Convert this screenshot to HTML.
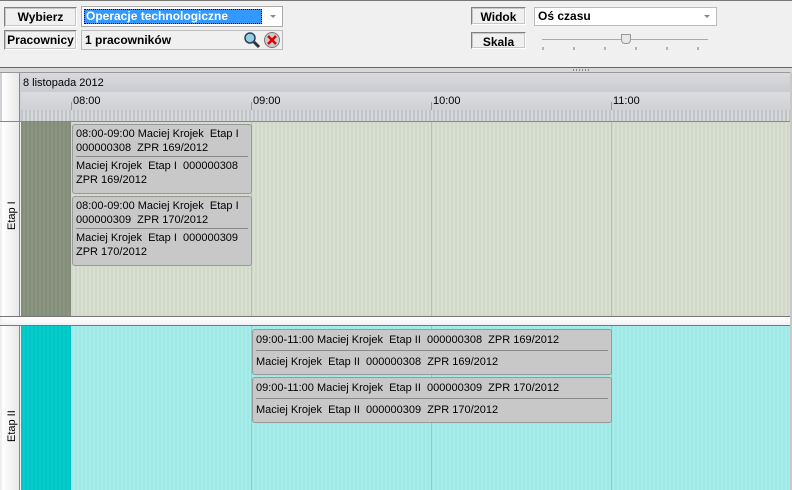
<!DOCTYPE html>
<html><head><meta charset="utf-8"><style>
*{box-sizing:border-box;margin:0;padding:0}
body{width:792px;height:490px;overflow:hidden;background:#f0f0f0;font-family:"Liberation Sans",sans-serif;font-size:11px;color:#000;position:relative}
.a{position:absolute}
.lbl{position:absolute;border:1px solid #fff;border-top-color:#808080;border-left-color:#808080;background:#f0f0f0;font-weight:bold;font-size:12px;text-align:center;line-height:18px}
.lbl::after{content:"";position:absolute;inset:0;border:1px solid #c8c8c8;pointer-events:none}
.card{position:absolute;background:#c8c8c8;border:1px solid #999;border-radius:3px;font-size:11px;line-height:14px;padding:0 3px}
.card hr{border:0;border-top:1px solid #8a8a8a;margin:1px 0 2px}
.vt{position:absolute;transform:rotate(-90deg);transform-origin:left top;white-space:nowrap;font-size:11px}
</style></head><body>
<div class="a" style="left:0;top:0;width:792px;height:1px;background:#777"></div>
<div class="lbl" style="left:4px;top:7px;width:73px;height:20px">Wybierz</div>
<div class="a" style="left:81px;top:6px;width:202px;height:21px;background:#fff;border:1px solid #aaa"></div>
<div class="a" style="left:84px;top:9px;width:178px;height:15px;background:#3399ff;border:1px dotted #000;color:#fff;font-weight:bold;font-size:12px;line-height:13px;padding-left:1px">Operacje technologiczne</div>
<div class="a" style="left:270px;top:15px;width:0;height:0;border:3px solid transparent;border-top:3px solid #888"></div>
<div class="lbl" style="left:4px;top:30px;width:73px;height:20px">Pracownicy</div>
<div class="a" style="left:81px;top:30px;width:202px;height:20px;background:#f0f0f0;border:1px solid #bbb;font-weight:bold;font-size:12px;line-height:18px;padding-left:3px">1 pracowników</div>
<svg class="a" style="left:243px;top:31px" width="40" height="18"><circle cx="7" cy="7" r="5" fill="#9cd" stroke="#246" stroke-width="1.5"/><line x1="11" y1="11" x2="16" y2="16" stroke="#333" stroke-width="3"/><circle cx="29" cy="9" r="7.5" fill="#ccc" stroke="#777"/><path d="M25 5l8 8M33 5l-8 8" stroke="#d00" stroke-width="2.5"/></svg>
<div class="lbl" style="left:471px;top:7px;width:55px;height:18px">Widok</div>
<div class="a" style="left:534px;top:7px;width:183px;height:19px;background:#fff;border:1px solid #bbb;font-weight:bold;font-size:12px;line-height:17px;padding-left:3px">Oś czasu</div>
<div class="a" style="left:704px;top:15px;border:3px solid transparent;border-top:3px solid #888"></div>
<div class="lbl" style="left:471px;top:32px;width:55px;height:17px">Skala</div>
<div class="a" style="left:542px;top:39px;width:166px;height:1px;background:#aaa"></div>
<div class="a" style="left:621px;top:34px;width:10px;height:10px;background:#e8e8e8;border:1px solid #999;border-radius:0 0 4px 4px"></div>
<svg class="a" style="left:540px;top:47px" width="200" height="5"><g stroke="#777"><line x1="3" y1="0" x2="3" y2="3"/><line x1="34" y1="0" x2="34" y2="3"/><line x1="65" y1="0" x2="65" y2="3"/><line x1="96" y1="0" x2="96" y2="3"/><line x1="127" y1="0" x2="127" y2="3"/><line x1="158" y1="0" x2="158" y2="3"/></g></svg>
<div class="a" style="left:0;top:67px;width:792px;height:1px;background:#666"></div>
<div class="a" style="left:0;top:68px;width:792px;height:4px;background:#d8d8d8"></div>
<div class="a" style="left:573px;top:69px;width:18px;height:2px;background:repeating-linear-gradient(90deg,#888 0 1px,transparent 1px 3px)"></div>
<!-- header -->
<div class="a" style="left:0;top:72px;width:792px;height:49px;background:#cfd1d6;border-top:1px solid #999"></div>
<div class="a" style="left:2px;top:73px;width:18px;height:48px;background:linear-gradient(90deg,#fff,#e8e8e8);border-right:1px solid #888"></div>
<div class="a" style="left:21px;top:73px;width:771px;height:19px;background:linear-gradient(#d8dadf,#c9cbd1)"></div>
<div class="a" style="left:23px;top:77px;font-size:11px">8 listopada 2012</div>
<div class="a" style="left:21px;top:92px;width:771px;height:18px;background:linear-gradient(#dadcdf,#cfd1d4)"></div>
<div class="a" style="left:73px;top:95px">08:00</div><div class="a" style="left:71px;top:102px;width:1px;height:8px;background:#999"></div>
<div class="a" style="left:253px;top:95px">09:00</div><div class="a" style="left:251px;top:102px;width:1px;height:8px;background:#999"></div>
<div class="a" style="left:433px;top:95px">10:00</div><div class="a" style="left:431px;top:102px;width:1px;height:8px;background:#999"></div>
<div class="a" style="left:613px;top:95px">11:00</div><div class="a" style="left:611px;top:102px;width:1px;height:8px;background:#999"></div>
<div class="a" style="left:21px;top:110px;width:771px;height:11px;background:repeating-linear-gradient(90deg,#c0c3c7 0 2px,#d6d8da 2px 4px)"></div>
<!-- row1 -->
<div class="a" style="left:0;top:121px;width:792px;height:195px;background:#f0f0f0;border-top:1px solid #888"></div>
<div class="a" style="left:2px;top:122px;width:18px;height:194px;background:linear-gradient(90deg,#fff,#e8e8e8);border-right:1px solid #888"></div>
<div class="vt" style="left:6px;top:230px">Etap I</div>
<div class="a" style="left:21px;top:122px;width:50px;height:194px;background:repeating-linear-gradient(90deg,#838d79 0 2px,#8a9480 2px 4px)"></div>
<div class="a" style="left:71px;top:122px;width:719px;height:194px;background:repeating-linear-gradient(90deg,#d0d8c8 0 2px,#d8dfd1 2px 4px)"></div>
<div class="a" style="left:251px;top:122px;width:1px;height:194px;background:#b8c0b0"></div>
<div class="a" style="left:431px;top:122px;width:1px;height:194px;background:#b8c0b0"></div>
<div class="a" style="left:611px;top:122px;width:1px;height:194px;background:#b8c0b0"></div>
<div class="card" style="left:72px;top:124px;width:180px;height:70px;padding-top:2px">08:00-09:00 Maciej Krojek&nbsp; Etap I<br>000000308&nbsp; ZPR 169/2012<hr>Maciej Krojek&nbsp; Etap I&nbsp; 000000308<br>ZPR 169/2012</div>
<div class="card" style="left:72px;top:196px;width:180px;height:70px;padding-top:2px">08:00-09:00 Maciej Krojek&nbsp; Etap I<br>000000309&nbsp; ZPR 170/2012<hr>Maciej Krojek&nbsp; Etap I&nbsp; 000000309<br>ZPR 170/2012</div>
<!-- separator -->
<div class="a" style="left:0;top:316px;width:792px;height:1px;background:#777"></div>
<div class="a" style="left:2px;top:317px;width:790px;height:9px;background:linear-gradient(#fff,#f0f0f4)"></div>
<div class="a" style="left:0;top:325px;width:792px;height:1px;background:#777"></div>
<!-- row2 -->
<div class="a" style="left:2px;top:326px;width:18px;height:164px;background:linear-gradient(90deg,#fff,#e8e8e8);border-right:1px solid #888"></div>
<div class="vt" style="left:6px;top:442px">Etap II</div>
<div class="a" style="left:21px;top:326px;width:50px;height:164px;background:repeating-linear-gradient(90deg,#00c6c6 0 2px,#08cccc 2px 4px)"></div>
<div class="a" style="left:71px;top:326px;width:719px;height:164px;background:repeating-linear-gradient(90deg,#9ee8e6 0 2px,#a8ecea 2px 4px)"></div>
<div class="a" style="left:251px;top:326px;width:1px;height:164px;background:#88d0ce"></div>
<div class="a" style="left:431px;top:326px;width:1px;height:164px;background:#88d0ce"></div>
<div class="a" style="left:611px;top:326px;width:1px;height:164px;background:#88d0ce"></div>
<div class="card" style="left:252px;top:329px;width:360px;height:46px;padding-top:3px">09:00-11:00 Maciej Krojek&nbsp; Etap II&nbsp; 000000308&nbsp; ZPR 169/2012<hr style="margin:3px 0 4px">Maciej Krojek&nbsp; Etap II&nbsp; 000000308&nbsp; ZPR 169/2012</div>
<div class="card" style="left:252px;top:377px;width:360px;height:46px;padding-top:3px">09:00-11:00 Maciej Krojek&nbsp; Etap II&nbsp; 000000309&nbsp; ZPR 170/2012<hr style="margin:3px 0 4px">Maciej Krojek&nbsp; Etap II&nbsp; 000000309&nbsp; ZPR 170/2012</div>
<div class="a" style="left:790px;top:72px;width:2px;height:418px;background:#c8c8c8"></div>
</body></html>
